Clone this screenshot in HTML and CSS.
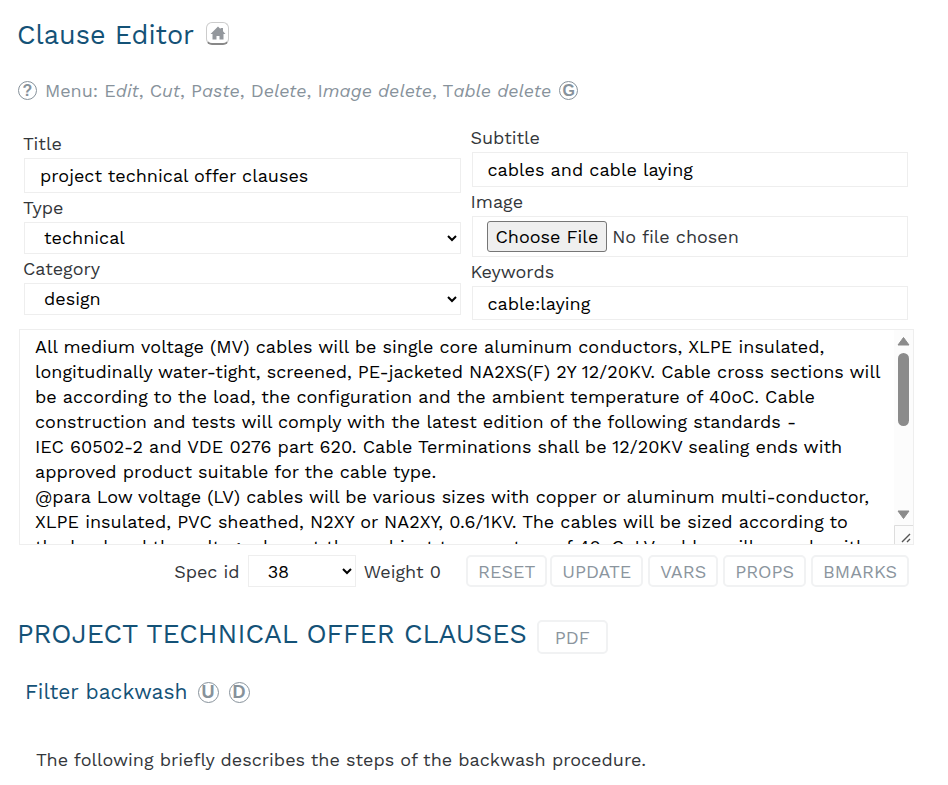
FILE: index.html
```html
<!DOCTYPE html>
<html lang="en">
<head>
  <meta charset="UTF-8" />
  <meta name="viewport" content="width=device-width, initial-scale=1.0"/>
  <title>Clause Editor</title>
  <link rel="stylesheet" href="styles.css">
</head>
<body>
  <header class="page-header">
    <h1>Clause Editor</h1>
    <a class="home" href="#" aria-label="Home">
      <svg width="16" height="15" viewBox="0 0 16 15" aria-hidden="true">
        <path d="M8 0.5 L10.5 3 V2 H13 V5.2 L15.5 8 H13.5 V13.5 H9.5 V10 H6.5 V13.5 H2.5 V8 H0.5 Z" fill="#94989d"/>
      </svg>
    </a>
  </header>

  <nav class="menu">
    <a class="circle" href="#">?</a>
    <span>Menu: E<i>dit</i>, C<i>ut</i>, P<i>aste</i>, D<i>elete</i>, I<i>mage delete</i>, T<i>able delete</i></span>
    <a class="circle" href="#">G</a>
  </nav>

  <form class="editor">
    <div class="fields">
      <div class="column">
        <label for="title">Title</label>
        <input type="text" id="title" value="project technical offer clauses">
        <label for="type">Type</label>
        <select id="type"><option>technical</option></select>
        <label for="category">Category</label>
        <select id="category"><option>design</option></select>
      </div>
      <div class="column">
        <label for="subtitle">Subtitle</label>
        <input type="text" id="subtitle" value="cables and cable laying">
        <label for="image">Image</label>
        <input type="file" id="image">
        <label for="keywords">Keywords</label>
        <input type="text" id="keywords" class="short" value="cable:laying">
      </div>
    </div>

    <div class="clause-box">
      <textarea id="clause" aria-label="Clause text">All medium voltage (MV) cables will be single core aluminum conductors, XLPE insulated, longitudinally water-tight, screened, PE-jacketed NA2XS(F) 2Y 12/20KV. Cable cross sections will be according to the load, the configuration and the ambient temperature of 40oC. Cable construction and tests will comply with the latest edition of the following standards -
IEC 60502-2 and VDE 0276 part 620. Cable Terminations shall be 12/20KV sealing ends with approved product suitable for the cable type.
@para Low voltage (LV) cables will be various sizes with copper or aluminum multi-conductor, XLPE insulated, PVC sheathed, N2XY or NA2XY, 0.6/1KV. The cables will be sized according to the load and the voltage drop at the ambient temperature of 40oC. LV cables will comply with the latest edition of the following standards -
IEC 60502-1 and VDE 0276 part 603.</textarea>
      <div class="scrollbar" aria-hidden="true">
        <svg class="arrow" width="13" height="10"><path d="M6.5 1.5L12 9H1Z"/></svg>
        <div class="thumb"></div>
        <svg class="arrow" width="13" height="10"><path d="M6.5 8.5L12 1H1Z"/></svg>
        <svg class="grip" width="19" height="19"><path d="M0.5 19V0.5H19" stroke="#ddd"/><path d="M8 17L16 9M13 17L16 14" stroke="#555" stroke-width="1.4"/></svg>
      </div>
    </div>

    <div class="actions">
      <label for="spec">Spec id</label>
      <select id="spec" class="spec"><option>38</option></select>
      <span class="weight">Weight 0</span>
      <div class="group">
        <button type="reset">RESET</button>
        <button type="button">UPDATE</button>
      </div>
      <button type="button">VARS</button>
      <button type="button">PROPS</button>
      <button type="button">BMARKS</button>
    </div>
  </form>

  <section class="preview">
    <div class="preview-header">
      <h2>PROJECT TECHNICAL OFFER CLAUSES</h2>
      <button type="button" class="pdf">PDF</button>
    </div>
    <div class="clause-header">
      <h3>Filter backwash</h3>
      <a class="circle" href="#">U</a>
      <a class="circle" href="#">D</a>
    </div>
    <p>The following briefly describes the steps of the backwash procedure.</p>
  </section>
</body>
</html>
```
FILE: styles.css
```css
* { box-sizing: border-box; }

body {
  margin: 0;
  padding: 17px 34px 16px 18px;
  font-family: 'Work Sans', Inter, sans-serif;
  font-size: 18px;
  line-height: 25px;
  color: #33363a;
  background: white;
}

h1, h2, h3 { margin: 0; font-weight: 400; color: #145277; }
h1, h2 { margin-left: -1px; font-size: 27px; line-height: 36px; }
h3 { font-size: 21px; line-height: 28px; }

.page-header { display: flex; align-items: center; gap: 12px; }

.home {
  display: flex;
  align-items: center;
  justify-content: center;
  width: 23px;
  height: 23px;
  margin-bottom: 3px;
  border: 1px solid #ccc;
  border-bottom: 2px solid #888;
  border-radius: 6px;
}

.menu {
  display: flex;
  align-items: center;
  gap: 8px;
  margin-top: 25px;
  color: #87929b;
}

/* letter in a ring */
.circle {
  display: flex;
  align-items: center;
  justify-content: center;
  width: 19px;
  height: 19px;
  border: 1px solid #87929b;
  border-radius: 50%;
  font-family: 'Liberation Sans', Arial, sans-serif;
  font-size: 16px;
  font-weight: 700;
  line-height: 17px;
  color: #87929b;
  text-decoration: none;
}

/* --- Form --- */
.editor { margin-top: 20px; }

.fields {
  display: grid;
  grid-template-columns: 1fr 1fr;
  gap: 11px;
  align-items: center;
  padding: 0 6px;
}

.column { display: flex; flex-direction: column; }
.column label { line-height: 29px; margin-left: -1px; }

input, select, textarea, button { font: inherit; }

input, select, textarea {
  width: 100%;
  border: 1px solid #eee;
  border-radius: 0;
  background: white;
  color: black;
}

input { height: 35px; padding: 0 15px; }
input.short { height: 34px; }
select { height: 32px; padding: 0 0 0 15px; }

input[type="file"] { height: 41px; padding: 4px 14px; color: #33363a; }
input[type="file"]::file-selector-button {
  height: 31px;
  padding: 0 8px;
  margin-right: 5px;
  border: 1px solid #767676;
  border-radius: 3px;
  background: #efefef;
  font: inherit;
  color: black;
}

.clause-box {
  display: flex;
  height: 216px;
  margin: 9px 0 0 1px;
  border: 1px solid #eee;
}

.clause-box textarea {
  flex: 1;
  min-width: 0;
  padding: 4px 14px 0 15px;
  border: none;
  resize: none;
}

.scrollbar {
  display: flex;
  flex-direction: column;
  align-items: center;
  width: 19px;
  padding-top: 6px;
  background: #fcfcfc;
}
.scrollbar .arrow { fill: #8b8b8b; stroke: #8b8b8b; stroke-linejoin: round; }
.scrollbar .thumb {
  width: 11px;
  height: 73px;
  margin: 7px 0 auto;
  border-radius: 6px;
  background: #8b8b8b;
}
.scrollbar .grip { margin-top: 5px; fill: none; }

/* --- Buttons under the text --- */
.actions {
  display: flex;
  align-items: center;
  justify-content: flex-end;
  gap: 5px;
  margin-top: 10px;
  padding-right: 5px;
}
.actions label { margin-right: 3px; }
.actions .spec { width: 108px; margin-right: 3px; }
.actions .weight { margin-right: 20px; }
.group { display: flex; gap: 3px; }

button {
  height: 32px;
  padding: 0 10px;
  border: 2px solid #f1f2f3;
  border-radius: 5px;
  background: white;
  color: #8b959e;
}

/* --- Preview --- */
.preview { margin-top: 28px; }
.preview-header { display: flex; align-items: flex-start; gap: 10px; }
.preview-header h2 { line-height: 38px; }
.pdf { height: 34px; padding: 0 16px; margin-top: 5px; }
.clause-header {
  display: flex;
  align-items: center;
  gap: 10px;
  margin: 24px 0 0 7px;
}
.clause-header .circle { width: 21px; height: 21px; font-size: 18px; line-height: 19px; }
.preview p { margin: 41px 0 0 18px; }
```
